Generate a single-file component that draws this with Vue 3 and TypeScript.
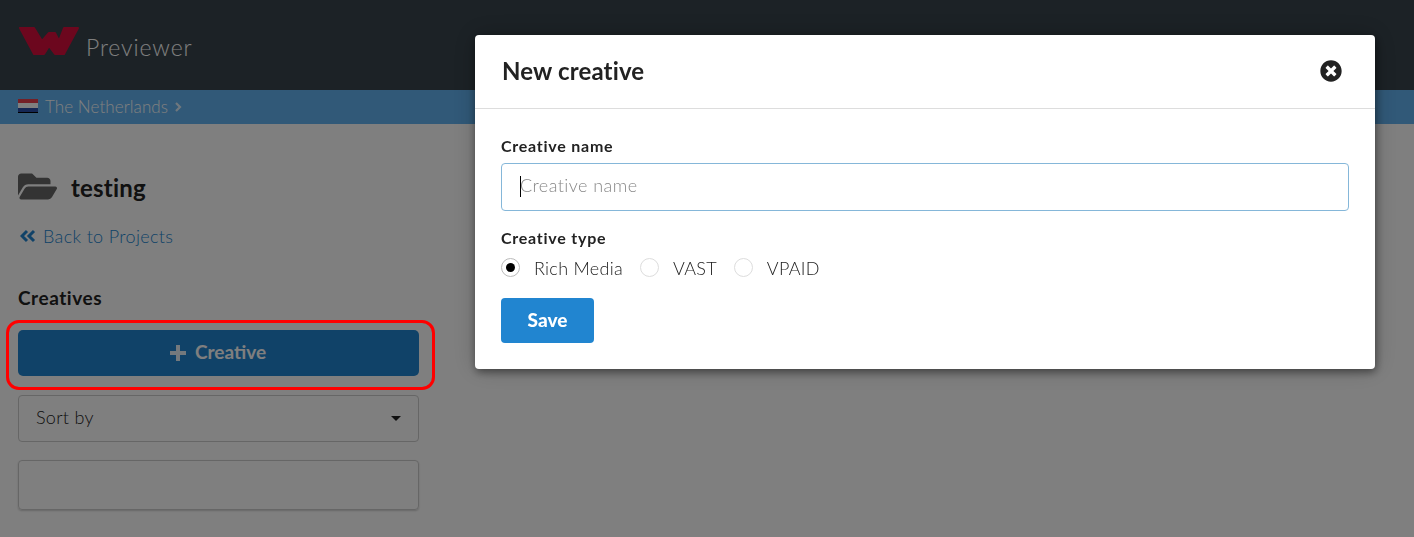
<template>
  <div class="page">
    <header class="topbar">
      <svg class="logo" viewBox="0 0 62 30" width="62" height="30">
        <polygon points="2,2 16,2 24,15 31,7 37,7 41,15 46,2 60,2 46,28 37,28 31,20 26,28 16,28" fill="#d80f3c" stroke="#d80f3c" stroke-width="2" stroke-linejoin="round" />
      </svg>
      <span class="brand">Previewer</span>
    </header>

    <nav class="crumbs">
      <span class="flag"></span>
      <span class="crumb-text">{{ country }}</span>
      <svg class="crumb-arrow" viewBox="0 0 8 12" width="8" height="12">
        <polyline points="2,2 6,6 2,10" fill="none" stroke="currentColor" stroke-width="2.2" />
      </svg>
    </nav>

    <main class="sidebar">
      <div class="project">
        <svg class="folder" viewBox="0 0 576 512" width="39" height="35">
          <path d="M572.694 292.093L500.27 416.248A63.997 63.997 0 0 1 444.989 448H45.025c-18.523 0-30.064-20.093-20.731-36.093l72.424-124.155A64 64 0 0 1 152 256h399.964c18.523 0 30.064 20.093 20.73 36.093zM152 224h328v-48c0-26.51-21.49-48-48-48H272l-64-64H48C21.49 64 0 85.49 0 112v278.046l69.077-118.418C86.214 242.25 117.989 224 152 224z" />
        </svg>
        <h2>testing</h2>
      </div>

      <a class="back" href="#">
        <svg viewBox="0 0 16 14" width="16" height="14">
          <polyline points="7,2 2,7 7,12" />
          <polyline points="14,2 9,7 14,12" />
        </svg>
        Back to Projects
      </a>

      <h3 class="section">Creatives</h3>

      <div class="add-wrap">
        <button class="add-btn" type="button">
          <svg viewBox="0 0 16 16" width="16" height="16">
            <path d="M6 0h4v6h6v4h-6v6H6v-6H0V6h6z" />
          </svg>
          Creative
        </button>
      </div>

      <div class="sort">
        <span>Sort by</span>
        <i class="caret"></i>
      </div>

      <div class="list-box"></div>
    </main>

    <div class="dimmer">
      <section class="modal">
        <div class="modal-head">
          <h1>New creative</h1>
          <svg class="close" viewBox="0 0 512 512" width="22" height="22">
            <path d="M256 8C119 8 8 119 8 256s111 248 248 248 248-111 248-248S393 8 256 8zm121.6 313.1c4.7 4.7 4.7 12.3 0 17L338 377.6c-4.7 4.7-12.3 4.7-17 0L256 312l-65.1 65.6c-4.7 4.7-12.3 4.7-17 0L134.4 338c-4.7-4.7-4.7-12.3 0-17l65.6-65-65.6-65.1c-4.7-4.7-4.7-12.3 0-17l39.6-39.6c4.7-4.7 12.3-4.7 17 0l65 65.7 65.1-65.6c4.7-4.7 12.3-4.7 17 0l39.6 39.6c4.7 4.7 4.7 12.3 0 17L312 256l65.6 65.1z" />
          </svg>
        </div>

        <form class="modal-body" @submit.prevent>
          <label class="field-label" for="creative-name">Creative name</label>
          <div class="input-wrap">
            <input id="creative-name" type="text" placeholder="Creative name" />
            <span class="cursor"></span>
          </div>

          <div class="field-label type-label">Creative type</div>
          <div class="radios">
            <label v-for="t in types" :key="t" class="radio">
              <span class="dot" :class="{ on: t === selected }"></span>
              {{ t }}
            </label>
          </div>

          <button class="save" type="submit">Save</button>
        </form>
      </section>
    </div>
  </div>
</template>

<script setup lang="ts">
const country = 'The Netherlands'
const types: string[] = ['Rich Media', 'VAST', 'VPAID']
const selected = 'Rich Media'
</script>

<style scoped>
.page {
  height: 537px;
  overflow: hidden;
  background: #fff;
  color: #222;
  font-family: Lato, "Open Sans", sans-serif;
  font-size: 18px;
}

.topbar {
  display: flex;
  align-items: center;
  height: 90px;
  padding: 0 0 0 18px;
  box-sizing: border-box;
  background: #38444c;
}

.logo {
  margin-top: -8px;
}

.brand {
  margin: 4px 0 0 6px;
  color: #fff;
  font-size: 23px;
  font-weight: 300;
  letter-spacing: 0.9px;
}

.crumbs {
  display: flex;
  align-items: center;
  height: 34px;
  padding-left: 18px;
  box-sizing: border-box;
  background: #62b2f0;
  color: #fff;
  font-size: 17px;
  font-weight: 300;
  letter-spacing: 0.08px;
}

.flag {
  width: 20px;
  height: 14px;
  margin: -3px 7px 0 0;
  background: linear-gradient(#e8404f 0 33%, #fff 33% 66%, #2a4fa8 66% 100%);
  border-bottom: 1px solid #000;
  box-sizing: border-box;
}

.crumb-text {
  margin-top: -2px;
}

.crumb-arrow {
  margin-left: 6px;
  opacity: 0.8;
}

.sidebar {
  width: 401px;
  margin-left: 18px;
}

.project {
  display: flex;
  align-items: center;
  gap: 14px;
  margin-top: 45px;
  height: 35px;
}

.folder {
  fill: #666;
}

.project h2 {
  margin: 2px 0 0;
  font-size: 24px;
  font-weight: 700;
  letter-spacing: 0.2px;
  color: #222;
}

.back {
  display: flex;
  align-items: center;
  gap: 7px;
  margin-top: 21px;
  color: #2185d0;
  font-size: 18px;
  font-weight: 300;
  letter-spacing: 0.35px;
  text-decoration: none;
}

.back svg {
  margin-left: 2px;
}

.back polyline {
  fill: none;
  stroke: currentColor;
  stroke-width: 3;
}

.section {
  margin: 39px 0 0;
  font-size: 19px;
  font-weight: 700;
  line-height: 24px;
  letter-spacing: 0.55px;
  color: #222;
}

.add-wrap {
  position: relative;
  margin-top: 20px;
}

/* red annotation frame drawn on the screenshot */
.add-wrap::after {
  content: "";
  position: absolute;
  inset: -10px -16px -14px -12px;
  border: 3px solid #f00;
  border-radius: 13px;
  z-index: 20;
}

.add-btn {
  display: flex;
  align-items: center;
  justify-content: center;
  gap: 9px;
  width: 100%;
  height: 46px;
  padding: 0 1px 3px 0;
  border: 0;
  border-radius: 5px;
  background: #2185d0;
  color: #fff;
  font-family: inherit;
  font-size: 19px;
  font-weight: 700;
}

.add-btn svg {
  fill: currentColor;
  opacity: 0.9;
  margin-top: 3px;
}

.sort {
  display: flex;
  align-items: center;
  justify-content: space-between;
  height: 47px;
  margin-top: 19px;
  padding: 0 17px 4px 17px;
  border: 1px solid #ccc;
  border-radius: 4px;
  box-sizing: border-box;
  font-weight: 300;
  letter-spacing: 0.3px;
  color: #222;
}

.caret {
  width: 0;
  height: 0;
  margin: 3px 0 0;
  border: 5px solid transparent;
  border-top: 5px solid #222;
  border-bottom: 0;
}

.list-box {
  height: 50px;
  margin-top: 18px;
  border: 1px solid #ccc;
  border-radius: 4px;
  box-sizing: border-box;
  box-shadow: 0 1px 2px rgba(0, 0, 0, 0.2);
}

.dimmer {
  position: fixed;
  inset: 0;
  z-index: 10;
  background: rgba(0, 0, 0, 0.5);
}

.modal {
  position: absolute;
  left: 475px;
  top: 35px;
  width: 900px;
  height: 334px;
  background: #fff;
  border-radius: 4px;
  box-shadow: 1px 3px 8px rgba(0, 0, 0, 0.45), 0 0 24px rgba(0, 0, 0, 0.2);
}

.modal-head {
  display: flex;
  align-items: center;
  justify-content: space-between;
  height: 74px;
  padding: 0 33px 0 27px;
  border-bottom: 1px solid #ddd;
  box-sizing: border-box;
}

.modal-head h1 {
  margin: -3px 0 0;
  font-size: 24px;
  font-weight: 700;
  letter-spacing: 0.15px;
  color: #222;
}

.close {
  fill: #222;
  margin-top: -2px;
}

.modal-body {
  display: flex;
  flex-direction: column;
  align-items: flex-start;
  padding: 27px 26px 0;
}

.field-label {
  font-size: 16px;
  font-weight: 700;
  line-height: 20px;
  letter-spacing: 0.75px;
  color: #222;
}

.input-wrap {
  position: relative;
  width: 100%;
  margin-top: 7px;
}

.input-wrap input {
  display: block;
  width: 100%;
  height: 48px;
  padding: 0 18px 4px;
  border: 1px solid #85b7d9;
  border-radius: 4px;
  box-sizing: border-box;
  outline: none;
  font-family: inherit;
  font-size: 18px;
  font-weight: 300;
  letter-spacing: 0.45px;
}

.input-wrap input::placeholder {
  color: #888;
}

.cursor {
  position: absolute;
  left: 19px;
  top: 13px;
  width: 1px;
  height: 21px;
  background: #000;
}

.type-label {
  margin-top: 17px;
}

.radios {
  display: flex;
  gap: 17px;
  margin-top: 10px;
}

.radio {
  display: flex;
  align-items: center;
  gap: 14px;
  height: 19px;
  font-size: 18px;
  font-weight: 300;
  letter-spacing: 0.28px;
  color: #222;
}

.dot {
  position: relative;
  width: 19px;
  height: 19px;
  border: 1px solid #ddd;
  border-radius: 50%;
  box-sizing: border-box;
}

.dot.on {
  border-color: #bbb;
}

.dot.on::after {
  content: "";
  position: absolute;
  inset: 4px;
  border-radius: 50%;
  background: #000;
}

.save {
  width: 93px;
  height: 45px;
  margin-top: 21px;
  padding: 0 0 2px;
  border: 0;
  border-radius: 4px;
  background: #2185d0;
  color: #fff;
  font-family: inherit;
  font-size: 19px;
  font-weight: 900;
}
</style>

<style>
html,
body {
  margin: 0;
  overflow: hidden;
}
</style>
